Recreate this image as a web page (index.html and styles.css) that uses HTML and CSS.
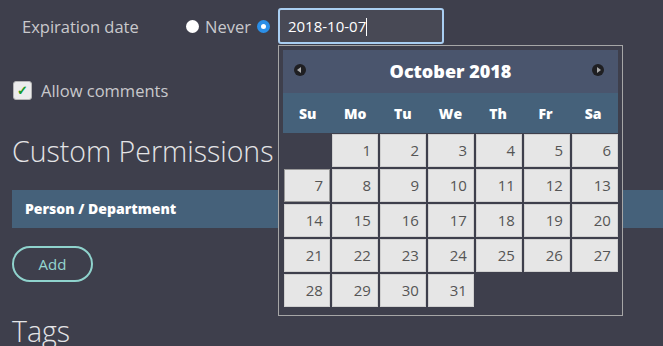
FILE: index.html
```html
<!DOCTYPE html>
<html lang="en">
<head>
    <meta charset="UTF-8">
    <title>Share settings</title>
    <link rel="stylesheet" href="styles.css">
</head>
<body>
    <div class="page">
        <div class="expiry">
            <span class="label">Expiration date</span>
            <span class="radio"></span>
            <span class="never">Never</span>
            <span class="radio on"></span>
            <div class="date-field">
                <div class="input">2018-10-07<span class="caret"></span></div>
                <div class="picker">
                    <div class="picker-title">
                        <span class="nav prev"></span>
                        October 2018
                        <span class="nav next"></span>
                    </div>
                    <div class="weekdays">
                        <span>Su</span><span>Mo</span><span>Tu</span><span>We</span><span>Th</span><span>Fr</span><span>Sa</span>
                    </div>
                    <div class="days">
                        <span class="blank"></span>
                        <span>1</span><span>2</span><span>3</span><span>4</span><span>5</span><span>6</span>
                        <span class="today">7</span><span>8</span><span>9</span><span>10</span><span>11</span><span>12</span><span>13</span>
                        <span>14</span><span>15</span><span>16</span><span>17</span><span>18</span><span>19</span><span>20</span>
                        <span>21</span><span>22</span><span>23</span><span>24</span><span>25</span><span>26</span><span>27</span>
                        <span>28</span><span>29</span><span>30</span><span>31</span>
                    </div>
                </div>
            </div>
        </div>

        <div class="check-row">
            <span class="checkbox">&#10003;</span>
            <span>Allow comments</span>
        </div>

        <h2>Custom Permissions</h2>
        <div class="table-head">Person / Department</div>
        <button class="btn">Add</button>

        <h2 class="tags">Tags</h2>
    </div>
</body>
</html>
```

FILE: styles.css
```css
* {
    box-sizing: border-box;
    margin: 0;
}

body {
    background: #3e3f4c;
    font-family: "Open Sans", "Liberation Sans", sans-serif;
    color: #c9c9cc;
    overflow: hidden;
    height: 346px;
}

.page {
    padding: 8px 0 0 12px;
}

.expiry {
    display: flex;
    align-items: center;
    height: 36px;
    font-size: 16.5px;
}

.label {
    margin-left: 10px;
    width: 164px;
}

.radio {
    width: 13px;
    height: 13px;
    border-radius: 50%;
    background: #fff;
}

.radio.on {
    border: 4.5px solid #2b8fe8;
    background: #fff;
    margin-left: 6px;
}

.never {
    margin-left: 6px;
}

.date-field {
    position: relative;
    margin-left: 8px;
}

.input {
    width: 166px;
    height: 36px;
    border: 2px solid #a9cef2;
    border-radius: 3px;
    background: #484955;
    color: #fff;
    font-size: 15px;
    line-height: 32px;
    padding-left: 8px;
}

.caret {
    display: inline-block;
    width: 1px;
    height: 18px;
    background: #fff;
    vertical-align: -4px;
}

.picker {
    position: absolute;
    top: 37px;
    left: 0;
    width: 345px;
    height: 271px;
    border: 1px solid #a6a6a6;
    background: #3e3f4c;
    padding: 4px;
    z-index: 2;
}

.picker-title {
    position: relative;
    height: 43px;
    background: #4a556d;
    color: #fff;
    font-weight: 800;
    font-size: 18px;
    text-align: center;
    line-height: 43px;
}

.nav {
    position: absolute;
    top: 14px;
    width: 12px;
    height: 12px;
    border-radius: 50%;
    background: #1f1f22;
}

.nav::after {
    content: "";
    position: absolute;
    top: 3px;
    border-top: 3px solid transparent;
    border-bottom: 3px solid transparent;
}

.prev { left: 11px; }
.next { right: 14px; }

.prev::after {
    left: 3px;
    border-right: 4px solid #aaa;
}

.next::after {
    left: 5px;
    border-left: 4px solid #aaa;
}

.weekdays {
    display: grid;
    grid-template-columns: repeat(7, 1fr);
    height: 40px;
    background: #45617a;
    color: #fff;
    font-weight: 800;
    font-size: 14px;
    align-items: center;
    text-align: center;
    padding: 0 1px;
}

.days {
    display: grid;
    grid-template-columns: repeat(7, 46px);
    grid-auto-rows: 33px;
    gap: 2px;
    margin: 1px 1px 0;
}

.days span {
    background: #e6e6e6;
    border: 1px solid #d0d0d0;
    color: #555;
    font-size: 15px;
    text-align: right;
    padding-right: 6px;
    line-height: 31px;
}

.days .blank {
    background: none;
    border: 0;
}

.days .today {
    border-color: #9a9a9a;
}

.check-row {
    display: flex;
    align-items: center;
    gap: 9px;
    margin-top: 36px;
    font-size: 16.5px;
    height: 20px;
}

.checkbox {
    width: 19px;
    height: 19px;
    margin-left: 1px;
    border: 1px solid #b5b5b5;
    border-radius: 3px;
    background: #ececec;
    color: #1a9a2a;
    font-size: 13px;
    font-weight: 700;
    text-align: center;
    line-height: 17px;
}

h2 {
    font-weight: 300;
    font-size: 28.5px;
    color: #e4e4e6;
    margin-top: 32px;
    line-height: 38px;
}

.table-head {
    margin-top: 20px;
    height: 38px;
    background: #45617a;
    color: #fff;
    font-weight: 800;
    font-size: 14px;
    line-height: 38px;
    padding-left: 13px;
}

.btn {
    display: block;
    margin-top: 18px;
    width: 81px;
    height: 36px;
    border: 2px solid #8fd3cd;
    border-radius: 18px;
    background: none;
    color: #94d6d0;
    font-family: inherit;
    font-size: 15px;
}

.tags {
    margin-top: 30px;
}
```
